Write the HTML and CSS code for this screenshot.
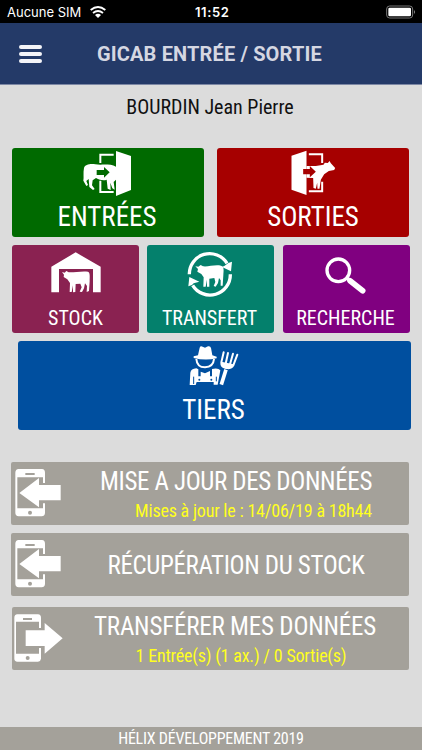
FILE: index.html
```html
<!DOCTYPE html>
<html lang="fr">
<head>
    <meta charset="UTF-8">
    <title>GICAB Entrée / Sortie</title>
    <link rel="stylesheet" href="styles.css">
</head>
<body>
    <div class="status">
        <span class="carrier">Aucune SIM</span>
        <svg class="wifi" viewBox="269 16 48 36">
            <g fill="none" stroke="#fff" stroke-width="5.5">
                <path d="M271 28Q293 10 315 28"/>
                <path d="M278 37Q293 25 308 37"/>
            </g>
            <path d="M284 43Q293 36 302 43L293 52z" fill="#fff"/>
        </svg>
        <span class="clock">11:52</span>
        <svg class="battery" viewBox="524 14 90 42">
            <rect x="526" y="17" width="78" height="36" rx="9" fill="none" stroke="#777" stroke-width="3"/>
            <rect x="531" y="22" width="68" height="26" rx="4" fill="#fff"/>
            <path d="M608 29q6 6 0 12z" fill="#888"/>
        </svg>
    </div>

    <div class="header">
        <div class="menu"><i></i><i></i><i></i></div>
        <h1>GICAB ENTRÉE / SORTIE</h1>
    </div>

    <div class="user">BOURDIN Jean Pierre</div>

    <div class="row row-big">
        <div class="btn entrees">
            <svg width="48" height="46" viewBox="249 30 144 138">
                <path d="M341 44H301V69M301 122V156H341" fill="none" stroke="#fff" stroke-width="6"/>
                <path d="M348 33L393 48V150L348 168z" fill="#fff"/>
                <path d="M348 80C330 70 303 76 286 73C271 71 255 73 252 84C249 98 252 112 250 122L259 138L264 135L259 123L266 117L268 141L279 150L284 147L276 136L278 121L288 114C300 121 312 122 320 119L323 146L332 150L331 128L337 145L344 149L341 126L348 119z" fill="#fff"/>
                <path d="M290 90H312V81L329 97L312 113V105H290z" fill="#006a00"/>
            </svg>
            <span>ENTRÉES</span>
        </div>
        <div class="btn sorties">
            <svg width="45" height="46" viewBox="237 33 134 138">
                <path d="M290 46H330V72M330 128V157H290" fill="none" stroke="#fff" stroke-width="6"/>
                <path d="M283 35V168L238 152V50z" fill="#fff"/>
                <path d="M283 81H311L334 77L338 71L347 72L352 66L356 73L369 87L366 93L350 96L336 106L326 122L322 149L316 149L315 131L311 149L304 147L303 117L283 116z" fill="#fff"/>
                <path d="M273 90H293V81L311 98L293 115V106H273z" fill="#a60000"/>
            </svg>
            <span>SORTIES</span>
        </div>
    </div>

    <div class="row row-small">
        <div class="btn stock">
            <svg width="50" height="41" viewBox="150 37 150 123">
                <path d="M151 158V81L224 38L299 81V158H276V88H174V158z" fill="#fff"/>
                <path d="M183 97L191 99L196 94L203 98C220 99 242 93 261 96C268 99 266 113 266 125L264 154L257 157L258 139L252 131L249 146L243 157L236 156L242 143L238 132L224 133L223 157L216 158L216 137L212 157L206 157L207 130L199 119L188 112L189 105z" fill="#fff"/>
            </svg>
            <span>STOCK</span>
        </div>
        <div class="btn transfert">
            <svg width="46" height="46" viewBox="560 33 138 138">
                <g fill="none" stroke="#fff" stroke-width="10">
                    <path d="M567 103A61 61 0 0 1 680 70"/>
                    <path d="M690 103A61 61 0 0 1 577 136"/>
                </g>
                <path d="M695 65L692 94L665 81L673 77L684 69zM567 111L564 139L575 135L580 130L597 125z" fill="#fff"/>
                <path d="M585 79L594 80L601 75L608 79C624 81 643 73 662 77C672 79 670 91 669 105L667 137L661 137L661 121L656 114L653 129L646 140L640 138L645 126L642 114L627 116L627 140L620 140L620 119L616 140L609 140L610 112L603 102L591 95L593 87z" fill="#fff"/>
            </svg>
            <span>TRANSFERT</span>
        </div>
        <div class="btn recherche">
            <svg width="41" height="37" viewBox="343 50 123 111">
                <circle cx="383" cy="90" r="34" fill="none" stroke="#fff" stroke-width="10"/>
                <path d="M408 112L420 122" stroke="#fff" stroke-width="10"/>
                <path d="M418 121L456 151" stroke="#fff" stroke-width="17" stroke-linecap="round"/>
            </svg>
            <span>RECHERCHE</span>
        </div>
    </div>

    <div class="btn tiers">
        <svg width="50" height="41" viewBox="176 30 150 123">
            <path d="M203 61L208 38Q210 32 217 35L224 38L233 34Q240 32 242 39L246 61L259 65V70Q225 78 190 69V64z" fill="#fff"/>
            <path d="M198 72Q200 97 224 97Q249 96 251 72" fill="none" stroke="#fff" stroke-width="6"/>
            <path d="M198 100L204 103V124H211V110L224 115L239 108V124H245V102Q264 98 270 106L262 149H250V141H199L196 150H178L180 113Q182 101 198 100z" fill="#fff"/>
            <path d="M190 125V147M258 125V139" stroke="#004f9f" stroke-width="3"/>
            <circle cx="207" cy="134" r="3" fill="#004f9f"/>
            <circle cx="243" cy="134" r="3" fill="#004f9f"/>
            <path d="M287 104L273 149" stroke="#fff" stroke-width="11"/>
            <path d="M280 52L273 82Q272 96 286 98Q302 103 309 91L321 59M293 54L286 86M308 56L299 88" fill="none" stroke="#fff" stroke-width="6" stroke-linecap="round"/>
            <path d="M273 80L310 88Q302 106 286 101Q270 96 273 80" fill="#fff"/>
        </svg>
        <span>TIERS</span>
    </div>

    <div class="actions">
        <div class="action">
            <svg width="47" height="48" viewBox="46 42 141 144">
                <path d="M57 42H127Q136 43 136 53V84H130V67H53V160H130V145H136V174Q135 184 126 184H57Q47 183 47 173V53Q47 43 57 42z" fill="#fff"/>
                <path d="M77 57H105" stroke="#a4a19a" stroke-width="6"/>
                <circle cx="91" cy="173" r="6" fill="#a4a19a"/>
                <path d="M59 114L118 69V90H183V136H118V157z" fill="#fff"/>
            </svg>
            <div class="label">
                <b>MISE A JOUR DES DONNÉES</b>
                <em class="right">Mises à jour le : 14/06/19 à 18h44</em>
            </div>
        </div>
        <div class="action single">
            <svg width="47" height="48" viewBox="46 42 141 144">
                <path d="M57 42H127Q136 43 136 53V84H130V67H53V160H130V145H136V174Q135 184 126 184H57Q47 183 47 173V53Q47 43 57 42z" fill="#fff"/>
                <path d="M77 57H105" stroke="#a4a19a" stroke-width="6"/>
                <circle cx="91" cy="173" r="6" fill="#a4a19a"/>
                <path d="M59 114L118 69V90H183V136H118V157z" fill="#fff"/>
            </svg>
            <div class="label">
                <b>RÉCUPÉRATION DU STOCK</b>
            </div>
        </div>
        <div class="action send">
            <svg width="49" height="48" viewBox="41 56 147 144">
                <path d="M51 57H113Q122 58 122 67V98H116V79H47V175H116V158H122V190Q121 198 113 199H51Q42 198 42 190V67Q42 58 51 57z" fill="#fff"/>
                <path d="M68 71H95" stroke="#a4a19a" stroke-width="6"/>
                <circle cx="82" cy="188" r="6" fill="#a4a19a"/>
                <path d="M76 105H133V83L187 129L133 175V152H76z" fill="#fff"/>
            </svg>
            <div class="label">
                <b>TRANSFÉRER MES DONNÉES</b>
                <em>1 Entrée(s) (1 ax.) / 0 Sortie(s)</em>
            </div>
        </div>
    </div>

    <div class="footer">HÉLIX DÉVELOPPEMENT 2019</div>
</body>
</html>
```
FILE: styles.css
```css
* {
    margin: 0;
    padding: 0;
    box-sizing: border-box;
}

body {
    width: 422px;
    height: 750px;
    display: flex;
    flex-direction: column;
    overflow: hidden;
    background: #dcdcdc;
    font-family: "Roboto Condensed", Roboto, sans-serif;
    font-stretch: 75%;
    white-space: nowrap;
}

svg {
    display: block;
    flex: none;
}

.status {
    height: 23px;
    display: grid;
    grid-template-columns: 90px 105px 196px 31px;
    align-items: center;
    padding-top: 1px;
    background: #000;
    color: #fff;
    font-family: Inter, sans-serif;
    font-stretch: 100%;
    font-size: 13px;
}

.carrier {
    padding-left: 7px;
}

.wifi {
    width: 16px;
    height: 12px;
}

.clock {
    font-weight: 600;
    letter-spacing: 0.6px;
}

.battery {
    width: 30px;
    height: 14px;
    margin-left: -5px;
}

.header {
    height: 62px;
    display: flex;
    align-items: center;
    background: #243a68;
    border-bottom: 1px solid #7d88a5;
}

.menu {
    width: 97px;
    padding-left: 19px;
}

.menu i {
    display: block;
    width: 23px;
    height: 4px;
    margin: 3px 0;
    border-radius: 2px;
    background: #f4f4f8;
}

h1 {
    font-family: Roboto, sans-serif;
    font-size: 20px;
    font-weight: 700;
    font-stretch: 100%;
    letter-spacing: 0.15px;
    color: #d5d7e2;
}

.user {
    height: 63px;
    padding: 10px 2px 0 0;
    line-height: 24px;
    font-size: 20px;
    text-align: center;
    color: #111;
}

.row {
    display: flex;
    margin-left: 12px;
    margin-bottom: 8px;
}

.row-big {
    gap: 13px;
}

.row-small {
    gap: 8px;
    font-size: 20px;
}

.btn {
    height: 89px;
    display: flex;
    flex-direction: column;
    align-items: center;
    justify-content: space-between;
    border-radius: 3px;
    color: #fff;
}

.row-big .btn {
    width: 192px;
    padding-top: 2px;
    font-size: 27px;
}

.row-big .entrees {
    padding-right: 2px;
}

.btn span {
    line-height: 24px;
    margin-bottom: 8px;
}

.row-small .btn {
    width: 127px;
    height: 88px;
    padding-top: 7px;
}

.row-small .btn span {
    margin-bottom: 3px;
}

.entrees {
    background: #006a00;
}

.sorties {
    background: #a60000;
}

.stock {
    background: #8a2251;
}

.row-small .transfert {
    padding-top: 6px;
    padding-right: 2px;
    background: #04806c;
}

.row-small .recherche {
    margin-left: 1px;
    padding-top: 12px;
    padding-right: 2px;
    background: #800080;
}

.tiers {
    width: 393px;
    margin-left: 18px;
    padding-top: 4px;
    padding-right: 2px;
    background: #004f9f;
    font-size: 27px;
}

.actions {
    padding: 32px 0 0 11px;
}

.action {
    width: 398px;
    height: 63px;
    display: flex;
    padding: 7px 0 0 4px;
    margin-bottom: 8px;
    border-radius: 2px;
    background: #a4a19a;
}

.label {
    width: 272px;
    margin-left: 38px;
    display: flex;
    flex-direction: column;
    align-items: center;
}

.label b {
    line-height: 26px;
    font-size: 25px;
    font-weight: 400;
    letter-spacing: -0.35px;
    color: #fff;
}

.label em {
    line-height: 22px;
    margin-top: 5px;
    font-size: 18px;
    font-style: normal;
    letter-spacing: -0.2px;
    color: #ffff1e;
}

.label .right {
    align-self: flex-end;
}

.single .label {
    padding-top: 13px;
}

.send {
    width: 397px;
    margin-top: 11px;
    margin-left: 1px;
    padding-left: 2px;
}

.send .label {
    margin-left: 36px;
}

.send b {
    letter-spacing: -0.2px;
}

.send em {
    margin-left: 12px;
}

.footer {
    height: 23px;
    margin-top: auto;
    line-height: 24px;
    font-size: 16px;
    letter-spacing: -0.25px;
    text-align: center;
    background: #a4a19a;
    color: #fff;
}
```
